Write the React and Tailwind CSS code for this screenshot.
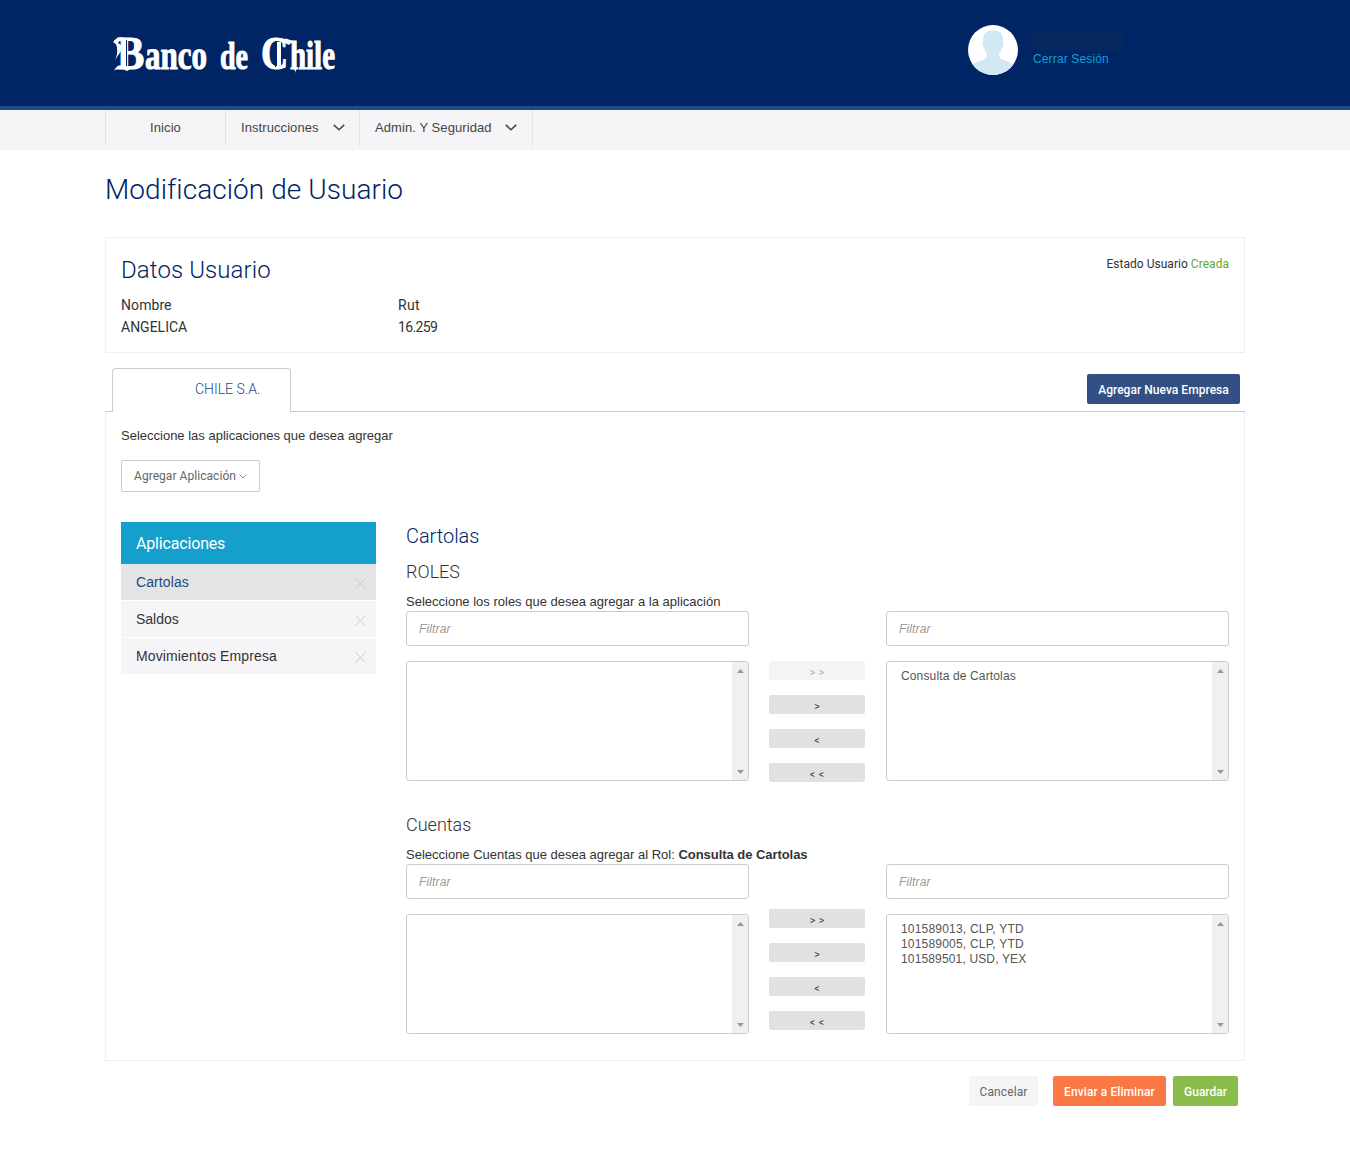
import React from "react";

const sans = "font-['Liberation_Sans',sans-serif]";

function Chevron() {
  return (
    <svg viewBox="0 0 12 7" className="mb-0.5 h-[7px] w-3" fill="none" stroke="#444" strokeWidth="1.5">
      <path d="M0.8 0.9 L6 5.8 L11.2 0.9" />
    </svg>
  );
}

function Cross() {
  return (
    <svg viewBox="0 0 11 11" className="mt-0.5 h-[11px] w-[11px]" stroke="#cbcbce" strokeWidth="1">
      <path d="M0.5 0.5 L10.5 10.5 M10.5 0.5 L0.5 10.5" />
    </svg>
  );
}

function Logo() {
  return (
    <svg
      viewBox="0 0 240 106"
      className="h-[106px] w-[240px] overflow-visible"
      fill="#fff"
      stroke="#fff"
      strokeWidth="1.1"
      fontFamily="'Liberation Serif', serif"
      fontWeight="bold"
    >
      <text transform="translate(12 69) scale(0.87 1)" fontSize="47">B</text>
      <text transform="translate(40 69) scale(0.756 1)" fontSize="41">anco</text>
      <text transform="translate(115 69) scale(0.718 1)" fontSize="39">de</text>
      <text transform="translate(156 69) scale(0.8 1)" fontSize="47">C</text>
      <text transform="translate(185 69) scale(0.723 1)" fontSize="40">hile</text>
      {/* pen flourishes of the two capitals */}
      <path stroke="none" d="M8 42 Q12 36 18 37.5 L23 39.5 L19 41 Q15 39.500 13 43 Q18 45 16 51 L10 60 Q13 54 12 48 Q12 44 8 42 Z" />
      <path stroke="none" d="M9 70.500 Q13 63 19 66 L27 68 L22 71 Q15 67 9 70.500 Z" />
      <path stroke="none" d="M172 42 H176 V65 L172 67 Z M176 41 L181 38.500 L188 41 L184 45 Z" />
      <path fill="none" stroke="#002464" strokeWidth="1" d="M21.500 40 V66 M170.500 41 V67" />
      <path stroke="none" d="M187 68 L192 68 L190 73 Q191 70 187 68 Z" />
    </svg>
  );
}

function Avatar() {
  return (
    <svg viewBox="0 0 50 50" className="mt-[25px] ml-[623px] h-[50px] w-[50px]">
      <defs><clipPath id="avatar"><circle cx="25" cy="25" r="25" /></clipPath></defs>
      <circle cx="25" cy="25" r="25" fill="#fff" />
      <path
        clipPath="url(#avatar)"
        fill="#d2e8f5"
        d="M19 6.500 Q25 4 31 6.500 Q35 8 35 16 Q36.500 19 34 23 Q33 27 31 29 Q31 33 34 34.500 Q42 37 46 40 V50 H4 V40 Q9 36 16 34.500 Q19 33 19 29 Q17 27 16 23 Q13.500 19 15 16 Q15 8 19 6.500 Z"
      />
    </svg>
  );
}

function Filter() {
  return (
    <div className={"flex h-[35px] items-center rounded-[3px] border border-[#ccc] bg-white px-3 text-[12px] tracking-[0.15px] text-[#999] italic " + sans}>
      Filtrar
    </div>
  );
}

function ListBox({ items = [] }) {
  return (
    <div className="mt-[15px] flex h-[120px] overflow-hidden rounded-[3px] border border-[#ccc] bg-white">
      <div className={"flex-1 pt-[7px] pl-[14px] text-[12px] leading-[15px] text-[#555] " + sans}>
        {items.map(([text, tracking]) => (
          <div key={text} className={tracking}>{text}</div>
        ))}
      </div>
      <div className="flex w-4 flex-col items-end justify-between bg-[#f0f0f0] pt-[7px] pr-1 pb-[6px]">
        <svg viewBox="0 0 7 4" className="h-1 w-[7px]" fill="#9a9a9a"><path d="M3.5 0 L7 4 H0 Z" /></svg>
        <svg viewBox="0 0 7 4" className="h-1 w-[7px]" fill="#9a9a9a"><path d="M0 0 H7 L3.5 4 Z" /></svg>
      </div>
    </div>
  );
}

function Transfer({ right, firstDisabled, offset }) {
  return (
    <div className="flex">
      <div className="w-[343px]"><Filter /><ListBox /></div>
      <div className={"mx-5 flex w-[97px] flex-col gap-[15px] pr-px " + offset}>
        {["> >", ">", "<", "< <"].map((label, i) => (
          <div
            key={label}
            className={
              "h-[19px] rounded-[2px] text-center font-['Roboto',sans-serif] text-[10.5px] leading-[24px] [word-spacing:1px] " +
              (i === 0 && firstDisabled ? "bg-[#f4f4f4] text-[#b0b0b0]" : "bg-[#e1e1e1] text-[#444]")
            }
          >
            {label}
          </div>
        ))}
      </div>
      <div className="w-[343px]"><Filter /><ListBox items={right} /></div>
    </div>
  );
}

const apps = [
  ["Cartolas", "tracking-[0.1px]"],
  ["Saldos", ""],
  ["Movimientos Empresa", "tracking-[0.13px]"],
];

const roles = [["Consulta de Cartolas", "tracking-[0.14px]"]];

const accounts = [
  ["101589013, CLP, YTD", "tracking-[0.2px]"],
  ["101589005, CLP, YTD", "tracking-[0.2px]"],
  ["101589501, USD, YEX", "tracking-[0.15px]"],
];

export default function App() {
  return (
    <div className="h-[1169px] w-[1350px] overflow-hidden bg-white font-['Roboto',sans-serif] text-[#333]">
      <header className="flex h-[110px] border-b-4 border-[#204a80] bg-[#002464] pl-[105px]">
        <Logo />
        <Avatar />
        <div className="ml-[14px] pt-[32px]">
          <div className="h-[18px] w-[91px] bg-[#04285f]" />
          <div className={"ml-px text-[12px] leading-[18px] tracking-[0.14px] text-[#0fa0d8] " + sans}>Cerrar Sesión</div>
        </div>
      </header>

      <nav className={"h-10 bg-[#f5f5f8] pl-[105px] text-[13px] tracking-[0.08px] text-[#444] " + sans}>
        <div className="flex h-9 leading-[36px]">
          <div className="w-[120px] border-l border-[#e4e4e8] text-center">Inicio</div>
          <div className="flex w-[134px] items-center justify-between border-l border-[#e4e4e8] pr-[14px] pl-[15px]">
            Instrucciones<Chevron />
          </div>
          <div className="flex w-[174px] items-center justify-between border-x border-[#e4e4e8] pr-[15px] pl-[15px]">
            Admin. Y Seguridad<Chevron />
          </div>
        </div>
      </nav>

      <main className="mx-auto w-[1140px]">
        <h1 className="pt-[22px] text-[28px] leading-9 font-light tracking-[0.06px] text-[#002464]">Modificación de Usuario</h1>

        <section className="mt-[29px] flex h-[116px] justify-between border border-[#efefef] px-[15px]">
          <div>
            <h2 className="pt-[17px] text-[24px] leading-[30px] font-light tracking-[0.1px] text-[#002464]">Datos Usuario</h2>
            <div className="mt-[9px] flex text-[14px] leading-[22px]">
              <div className="w-[277px]">
                <div className="tracking-[0.08px]">Nombre</div>
                <div>ANGELICA</div>
              </div>
              <div>
                <div className="tracking-[0.3px]">Rut</div>
                <div className="tracking-[-0.65px]">16.259</div>
              </div>
            </div>
          </div>
          <div className="pt-[17px] text-[12px] leading-[18px] tracking-[0.03px]">
            Estado Usuario <span className="text-[#62a92c]">Creada</span>
          </div>
        </section>

        <div className="mt-[15px] flex h-11 items-end">
          <div className="w-[7px] border-b border-[#ccc]" />
          <div className="h-11 w-[179px] rounded-t-[4px] border border-b-0 border-[#ccc] pl-[82px] text-[14px] leading-[41px] font-light text-[#204a80]">
            CHILE S.A.
          </div>
          <div className="flex h-11 flex-1 justify-end border-b border-[#ccc] pr-[5px]">
            <div className="mt-1.5 h-[30px] w-[153px] rounded-[2px] bg-[#335084] text-center text-[12px] leading-[32px] font-medium tracking-[0.04px] text-white">
              Agregar Nueva Empresa
            </div>
          </div>
        </div>

        <section className="h-[649px] border border-t-0 border-[#efefef] px-[15px]">
          <p className={"pt-[15px] text-[13px] leading-[18px] " + sans}>Seleccione las aplicaciones que desea agregar</p>
          <div className="mt-[15px] flex h-8 w-[139px] items-center justify-between rounded-[2px] border border-[#ccc] pr-3 pl-3 text-[12px] tracking-[0.05px] text-[#666]">
            Agregar Aplicación
            <svg viewBox="0 0 8 5" className="h-[5px] w-2" fill="none" stroke="#888" strokeWidth="0.9"><path d="M0.5 0.5 L4 4 L7.5 0.5" /></svg>
          </div>

          <div className="mt-[30px] flex">
            <aside className={"w-[255px] text-[14px] " + sans}>
              <div className="h-[42px] bg-[#149fcc] pl-[15px] font-['Roboto',sans-serif] text-[16px] leading-[43px] tracking-[-0.17px] text-white">Aplicaciones</div>
              {apps.map(([name, tracking], i) => (
                <div
                  key={name}
                  className={
                    "mb-px flex h-9 items-center justify-between pr-[10px] pl-[15px] " +
                    (i === 0 ? "bg-[#e4e4e7] text-[#204a80]" : "bg-[#f5f5f8]")
                  }
                >
                  <span className={tracking}>{name}</span>
                  <Cross />
                </div>
              ))}
            </aside>

            <div className="ml-[30px] w-[823px]">
              <h3 className="pt-px text-[20px] leading-[27px] font-light tracking-[-0.05px] text-[#002464]">Cartolas</h3>
              <h4 className="mt-2.5 text-[18px] leading-6 font-light">ROLES</h4>
              <p className={"mt-2 text-[13px] leading-[19px] " + sans}>Seleccione los roles que desea agregar a la aplicación</p>
              <Transfer right={roles} firstDisabled offset="pt-[50px]" />
              <h4 className="mt-[31px] text-[18px] leading-6 font-light">Cuentas</h4>
              <p className={"mt-2 text-[13px] leading-[19px] " + sans}>
                Seleccione Cuentas que desea agregar al Rol: <b className="tracking-[-0.05px]">Consulta de Cartolas</b>
              </p>
              <Transfer right={accounts} offset="pt-[45px]" />
            </div>
          </div>
        </section>

        <footer className="mt-[15px] flex h-[30px] justify-end pr-[7px] text-center text-[12px] leading-[32px]">
          <div className="w-[69px] rounded-[2px] bg-[#f5f5f8] tracking-[0.1px] text-[#666]">Cancelar</div>
          <div className="ml-[15px] w-[113px] rounded-[2px] bg-[#f97844] font-medium tracking-[0.08px] text-white">Enviar a Eliminar</div>
          <div className="ml-[7px] w-[65px] rounded-[2px] bg-[#8abc4b] font-medium text-white">Guardar</div>
        </footer>
      </main>
    </div>
  );
}
